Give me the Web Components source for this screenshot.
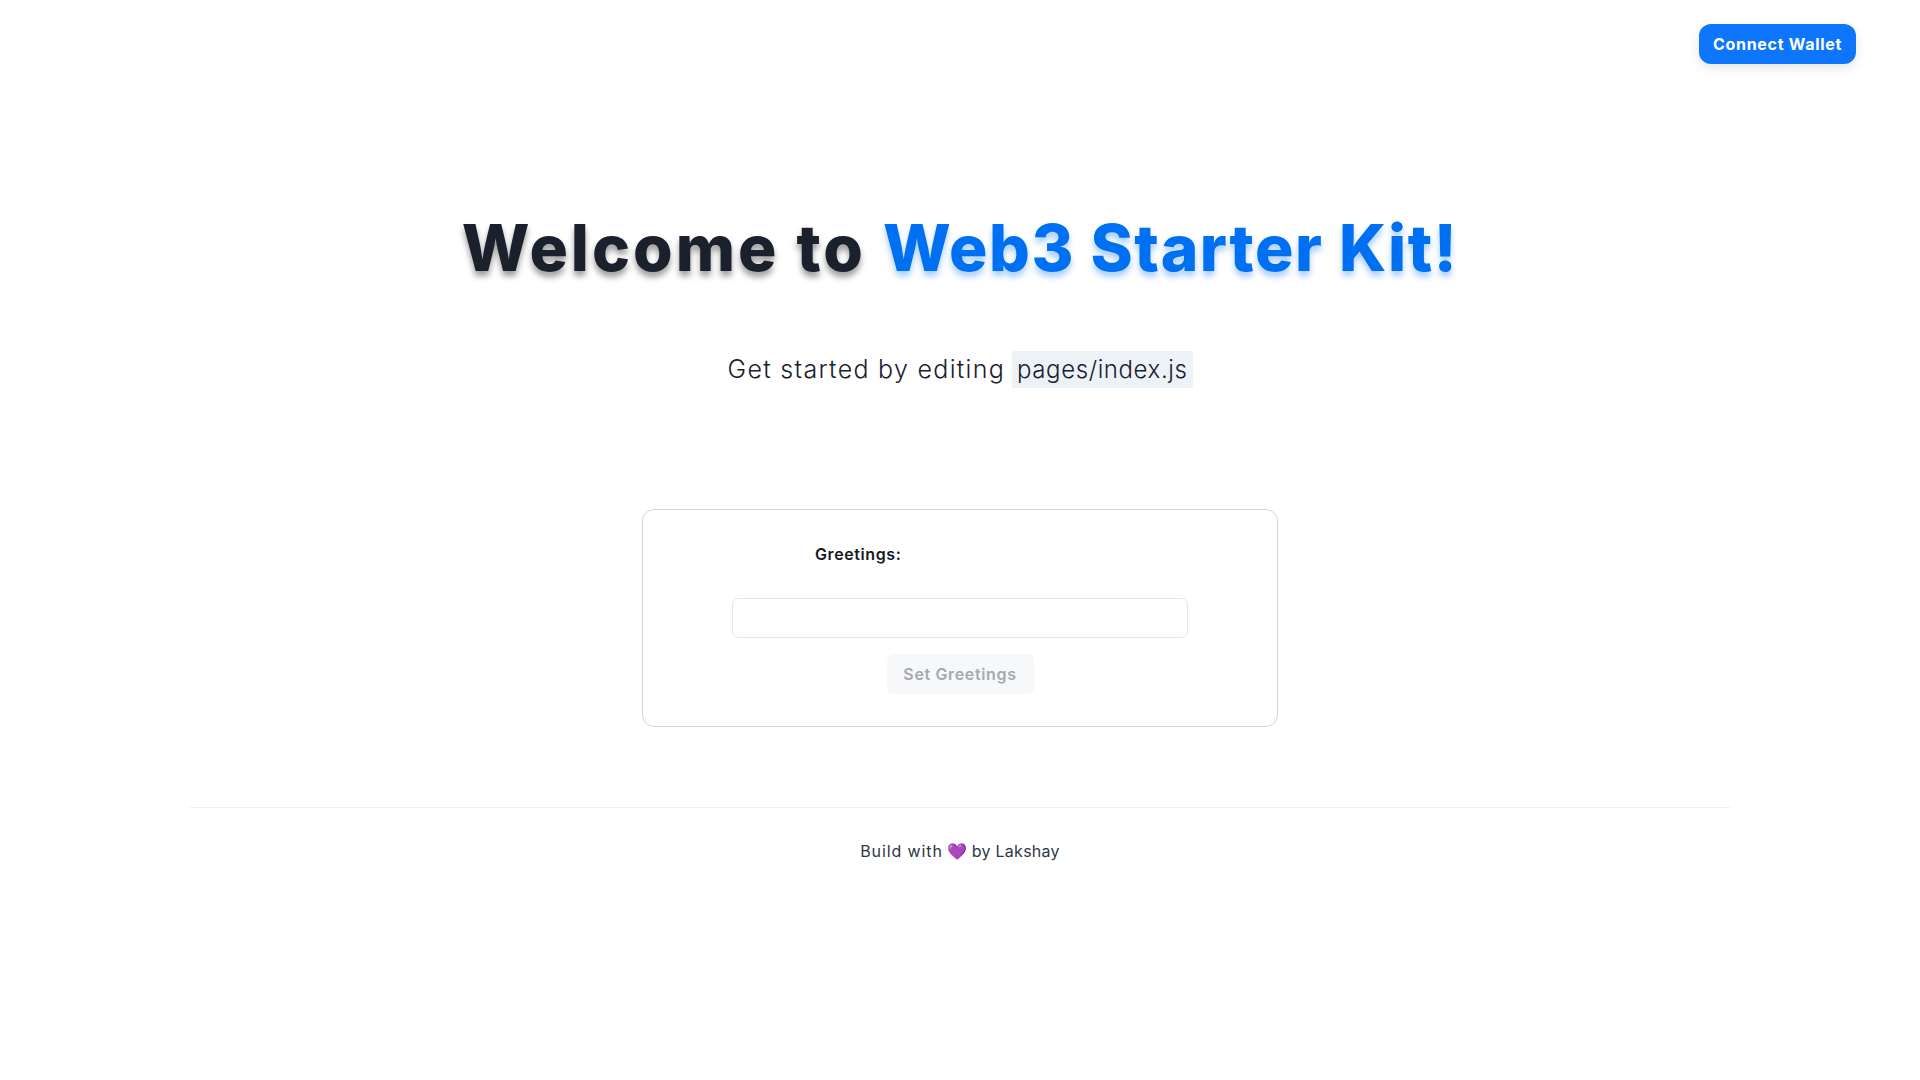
<!DOCTYPE html>
<html lang="en">
<head>
<meta charset="utf-8">
<title>Web3 Starter Kit</title>
<style>
    html, body {
        margin: 0;
        background: #fff;
    }

    body {
        font-family: Inter, "Liberation Sans", sans-serif;
        color: #1A202C;
    }

    .lead {
        letter-spacing: 0.9px;
    }

    .tail {
        letter-spacing: 0.25px;
    }
</style>
</head>
<body>

<app-nav>
    <wallet-button>Connect Wallet</wallet-button>
</app-nav>

<hero-intro>
    Welcome to <span slot="accent">Web3 Starter Kit!</span>
    <span slot="hint">Get started by editing</span>
    <span slot="file">pages/index.js</span>
</hero-intro>

<greeting-card label="Greetings:" action="Set Greetings"></greeting-card>

<app-footer><span class="lead">Build with</span> <span>💜</span> <span class="tail">by Lakshay</span></app-footer>

<script>
const templateNav = document.createElement('template')
templateNav.innerHTML = `
<style>
    :host {
        display: flex;
        justify-content: flex-end;
        padding: 24px 64px 0;
        height: 40px;
    }
</style>
<slot></slot>
`

const templateWallet = document.createElement('template')
templateWallet.innerHTML = `
<style>
    :host {
        display: block;
    }

    button {
        height: 40px;
        width: 157px;
        padding: 0;
        border: 0;
        border-radius: 12px;
        background: #0E76FD;
        color: #fff;
        font: 700 16px/40px Inter, "Liberation Sans", sans-serif;
        letter-spacing: 0.7px;
        box-shadow: 0 4px 12px rgba(0, 0, 0, 0.1);
    }
</style>
<button type="button"><slot></slot></button>
`

const templateHero = document.createElement('template')
templateHero.innerHTML = `
<style>
    :host {
        display: block;
        text-align: center;
    }

    h1 {
        margin: 0;
        padding-top: 144px;
        font-size: 64px;
        line-height: 80px;
        font-weight: 800;
        letter-spacing: 3px;
        color: #1A202C;
        text-shadow: 0 5px 6px rgba(0, 0, 0, 0.4);
    }

    .accent {
        color: #0070F3;
        letter-spacing: 1.55px;
        text-shadow: 0 5px 6px rgba(0, 112, 243, 0.35);
    }

    p {
        display: flex;
        justify-content: center;
        align-items: baseline;
        gap: 7px;
        margin: 63px 0 0;
        height: 37px;
        font-size: 25px;
        font-weight: 300;
        letter-spacing: 1.3px;
        color: #1A202C;
    }

    code {
        display: block;
        padding: 0 5px;
        line-height: 37px;
        border-radius: 2px;
        background: #EDF2F7;
        font-family: inherit;
        font-size: 24px;
        letter-spacing: 0.6px;
    }
</style>
<h1><slot></slot><span class="accent"><slot name="accent"></slot></span></h1>
<p><slot name="hint"></slot><code><slot name="file"></slot></code></p>
`

const templateCard = document.createElement('template')
templateCard.innerHTML = `
<style>
    :host {
        display: block;
        box-sizing: border-box;
        width: 636px;
        margin: 121px auto 0;
        padding: 32px 89px;
        height: 218px;
        border: 1px solid #CBD5E0;
        border-radius: 12px;
    }

    .label {
        margin: 0 0 0 83px;
        font-size: 16px;
        line-height: 24px;
        font-weight: 600;
        letter-spacing: 0.6px;
        color: #171923;
    }

    input {
        display: block;
        box-sizing: border-box;
        width: 456px;
        height: 40px;
        margin: 32px 0 0;
        border: 1px solid #E2E8F0;
        border-radius: 6px;
        background: #fff;
    }

    button {
        display: block;
        width: 147px;
        height: 40px;
        margin: 16px auto 0;
        padding: 0;
        border: 0;
        border-radius: 6px;
        background: #F7F8FA;
        color: #A6A9B0;
        font: 600 16px/40px Inter, "Liberation Sans", sans-serif;
        letter-spacing: 0.65px;
    }
</style>
<div class="label"></div>
<input type="text" aria-label="greeting">
<button type="button" disabled></button>
`

const templateFooter = document.createElement('template')
templateFooter.innerHTML = `
<style>
    :host {
        display: block;
        box-sizing: border-box;
        width: 1540px;
        margin: 80px auto 0;
        padding-top: 31px;
        border-top: 1px solid #EDF2F7;
        text-align: center;
        font-size: 16px;
        line-height: 24px;
        color: #2D3748;
    }
</style>
<slot></slot>
`

class AppNav extends HTMLElement {
    constructor(){
        super()
        this.attachShadow({mode:'open'})
        this.shadowRoot.appendChild(templateNav.content.cloneNode(true))
    }
}

class WalletButton extends HTMLElement {
    constructor(){
        super()
        this.attachShadow({mode:'open'})
        this.shadowRoot.appendChild(templateWallet.content.cloneNode(true))
    }
}

class HeroIntro extends HTMLElement {
    constructor(){
        super()
        this.attachShadow({mode:'open'})
        this.shadowRoot.appendChild(templateHero.content.cloneNode(true))
    }
}

class GreetingCard extends HTMLElement {
    constructor(){
        super()
        this.attachShadow({mode:'open'})
        this.shadowRoot.appendChild(templateCard.content.cloneNode(true))
        this.shadowRoot.querySelector('.label').textContent = this.getAttribute('label')
        this.shadowRoot.querySelector('button').textContent = this.getAttribute('action')
    }
}

class AppFooter extends HTMLElement {
    constructor(){
        super()
        this.attachShadow({mode:'open'})
        this.shadowRoot.appendChild(templateFooter.content.cloneNode(true))
    }
}

window.customElements.define('app-nav', AppNav)
window.customElements.define('wallet-button', WalletButton)
window.customElements.define('hero-intro', HeroIntro)
window.customElements.define('greeting-card', GreetingCard)
window.customElements.define('app-footer', AppFooter)
</script>
</body>
</html>
